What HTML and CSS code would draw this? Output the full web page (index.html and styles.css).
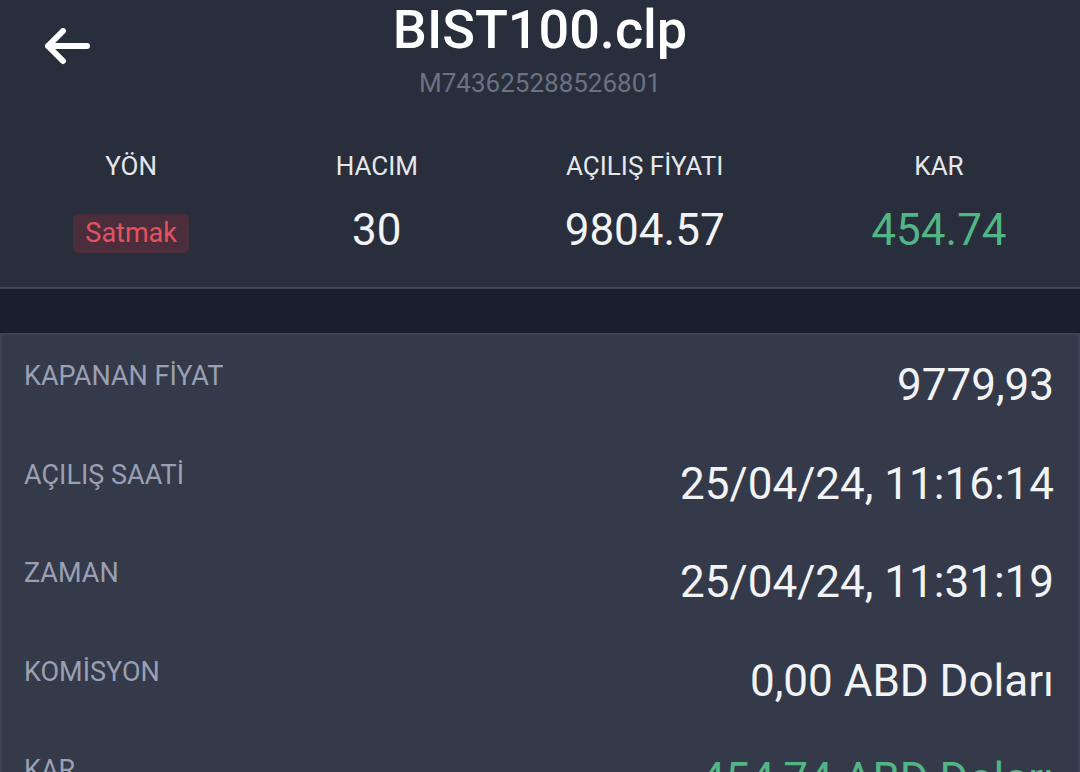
FILE: index.html
```html
<!DOCTYPE html>
<html lang="tr">
<head>
  <meta charset="UTF-8">
  <meta name="viewport" content="width=device-width, initial-scale=1.0">
  <title>BIST100.clp</title>
  <link rel="stylesheet" href="styles.css">
</head>
<body>
  <!-- üst kısım -->
  <div class="header">
    <div class="top">
      <a class="back" href="#">
        <svg width="50" height="42" viewBox="0 0 50 42">
          <path d="M5 18 H44 M20 3 L5 18 L20 33" fill="none" stroke="#fff" stroke-width="6" stroke-linecap="round" stroke-linejoin="round"/>
        </svg>
      </a>
      <div class="title-wrap">
        <div class="title">BIST100.clp</div>
        <div class="subtitle">M743625288526801</div>
      </div>
      <div></div>
    </div>
    <div class="stats">
      <div class="stat">
        <div class="stat-label">YÖN</div>
        <div class="stat-value"><span class="badge">Satmak</span></div>
      </div>
      <div class="stat">
        <div class="stat-label">HACIM</div>
        <div class="stat-value">30</div>
      </div>
      <div class="stat">
        <div class="stat-label">AÇILIŞ FİYATI</div>
        <div class="stat-value">9804.57</div>
      </div>
      <div class="stat">
        <div class="stat-label">KAR</div>
        <div class="stat-value green">454.74</div>
      </div>
    </div>
  </div>

  <div class="band"></div>

  <!-- detaylar -->
  <div class="card">
    <div class="row">
      <div class="row-label">KAPANAN FİYAT</div>
      <div class="row-value">9779,93</div>
    </div>
    <div class="row">
      <div class="row-label">AÇILIŞ SAATİ</div>
      <div class="row-value">25/04/24, 11:16:14</div>
    </div>
    <div class="row">
      <div class="row-label">ZAMAN</div>
      <div class="row-value">25/04/24, 11:31:19</div>
    </div>
    <div class="row">
      <div class="row-label">KOMİSYON</div>
      <div class="row-value">0,00 ABD Doları</div>
    </div>
    <div class="row">
      <div class="row-label">KAR</div>
      <div class="row-value green">454,74 ABD Doları</div>
    </div>
  </div>
</body>
</html>
```

FILE: styles.css
```css
body {
  margin: 0;
  padding: 0;
  background: #343a4a;
  font-family: Roboto, "Liberation Sans", sans-serif;
  color: #f2f3f5;
}
.header {
  background: #292e3c;
  border-bottom: 2px solid #414656;
  padding-bottom: 32px;
}
.top {
  display: grid;
  grid-template-columns: 1fr auto 1fr;
}
.back {
  display: block;
  width: 50px;
  height: 42px;
  margin: 28px 0 0 43px;
}
.back svg {
  display: block;
}
.title-wrap {
  text-align: center;
}
.title {
  font-size: 54px;
  font-weight: 500;
  line-height: 60px;
  color: #fff;
}
.subtitle {
  margin-top: 8px;
  font-size: 26px;
  line-height: 30px;
  color: #6b7282;
}
.stats {
  display: flex;
  justify-content: space-around;
  margin-top: 53px;
}
.stat {
  display: flex;
  flex-direction: column;
  align-items: center;
}
.stat-label {
  font-size: 26px;
  line-height: 30px;
  color: #e6e7eb;
}
.stat-value {
  margin-top: 24px;
  height: 50px;
  display: flex;
  align-items: flex-start;
  font-size: 44px;
  line-height: 50px;
}
.badge {
  margin-top: 9px;
  padding: 0 12px;
  height: 39px;
  line-height: 39px;
  border-radius: 5px;
  background: #4b2d3c;
  color: #e5525f;
  font-size: 27px;
}
.green {
  color: #52b585;
}
.band {
  height: 44px;
  background: #1b1f2d;
}
.card {
  border: 2px solid #3d4354;
  border-bottom: none;
  background: #343a4a;
}
.row {
  display: flex;
  justify-content: space-between;
  align-items: flex-start;
  padding: 25px 24px 23.5px 22px;
}
.row-label {
  font-size: 27px;
  line-height: 32px;
  color: #9aa0b2;
}
.row-value {
  font-size: 44px;
  line-height: 50px;
  color: #f2f3f5;
}
.row-value.green {
  color: #52b585;
}
```
